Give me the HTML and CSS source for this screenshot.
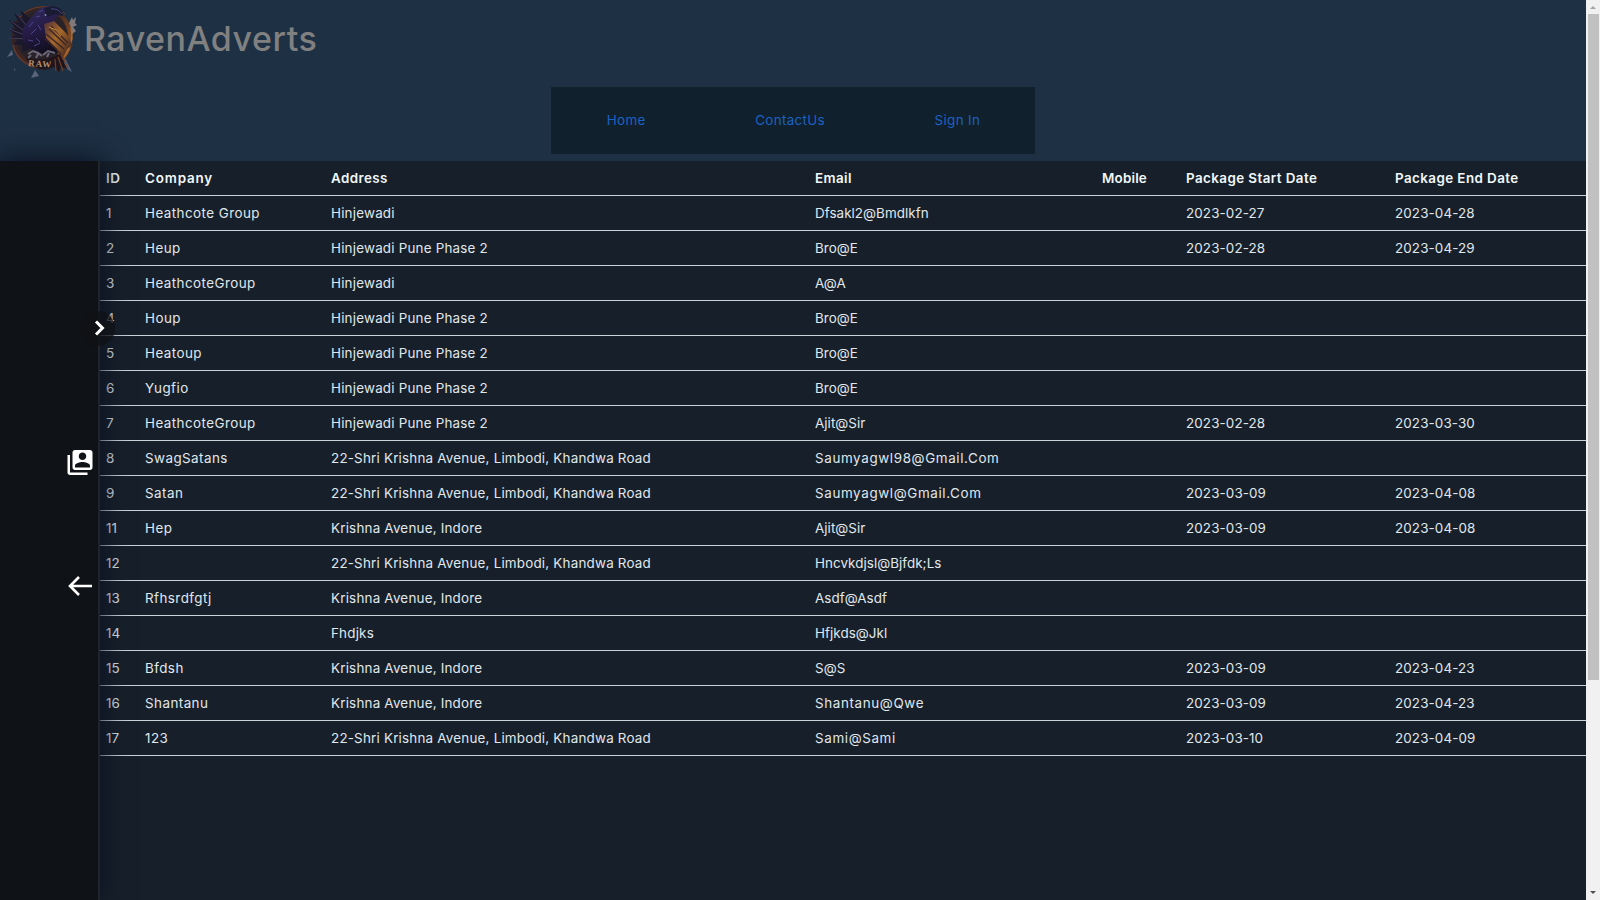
FILE: index.html
```html
<!DOCTYPE html>
<html lang="en">
<head>
<meta charset="utf-8">
<title>RavenAdverts</title>
<link rel="stylesheet" href="styles.css">
</head>
<body>
<div class="page">
  <div class="content">
    <header class="header">
      <div class="brand">
        <svg class="logo" viewBox="0 0 84 84">
          <defs>
            <linearGradient id="ring" x1="0" y1="0" x2="1" y2="0.6"><stop offset="0" stop-color="#2b2029"/><stop offset=".6" stop-color="#42261f"/><stop offset="1" stop-color="#8f5322"/></linearGradient>
            <linearGradient id="wing" x1="0" y1="0" x2="1" y2="1"><stop offset="0" stop-color="#4d3035"/><stop offset=".4" stop-color="#a5682b"/><stop offset=".7" stop-color="#5e3823"/><stop offset="1" stop-color="#2c191b"/></linearGradient>
            <linearGradient id="body" x1="0" y1="0" x2="0.4" y2="1"><stop offset="0" stop-color="#302e60"/><stop offset=".5" stop-color="#271c49"/><stop offset="1" stop-color="#110e1e"/></linearGradient>
          </defs>
          <path d="M69 23l3-6 1 3 3-3-1 6 2 2-4 2 3 4-5 4z" fill="#82797b"/>
          <path d="M12 50l-5 7 6-2zM65 58l7 14-5-3-3-6zM31 78l4-8 4 6-4 1zM14 68l2 3-2-1z" fill="#59647b"/>
          <ellipse cx="42" cy="37.500" rx="30.500" ry="31.500" fill="url(#ring)"/>
          <ellipse cx="42" cy="37" rx="26" ry="27" fill="#282228"/>
          <path d="M20 17C30 5 52 3 65 14" fill="none" stroke="#70412b"/>
          <path d="M71 28C75 44 65 58 55 64" fill="none" stroke="#b06a2c" stroke-width="1.500"/>
          <path d="M13 45C16 59 28 67 43 69" fill="none" stroke="#63392b" stroke-width="1.500"/>
          <path d="M36 24L20 10l3 9-9-6 5 10-10-3 7 9-8 0 8 6-7 3 9 2-5 4 9 1 0 7 13-5z" fill="#1b182c"/>
          <path d="M17 14l12 15M11 21l16 12M9 29l18 7M9 38l17 1" stroke="#463c54" fill="none"/>
          <path d="M62 13C56 4 42 5 36 12L25 25c-5 9-3 18 6 24l13 5 17-1 6-12-13-22z" fill="url(#body)"/>
          <path d="M44 9C53 3 64 8 63 16l-8-2-8 3z" fill="#191b32"/>
          <path d="M51 9q7-1 11 5M39 12l4-2M36 17l4-1M29 27l4-5M31 34l5-5M28 40l5 1M36 38l4 4M34 46l6-3M38 25l3 5" stroke="#4b488b" fill="none"/>
          <path d="M44 24l10-3 12 12 7 12-6 4-7 16-3-16-11-11z" fill="url(#wing)"/>
          <path d="M49 29l17 16M46 34l18 15M51 26l17 17M45 39l16 15" fill="none" stroke="#382327" stroke-width="1.300"/>
          <path d="M49 27l7 3 5 6" stroke="#c98a3d" fill="none"/>
          <circle cx="45.500" cy="15" r="1" fill="#7c8ab9"/>
          <path d="M25 57q17 6 35-3l7 15-6-2-2 5-5-5q-14 7-25-4z" fill="#21151b"/>
          <path d="M28 54l5-3 5 2 4 3M43 55l5-4 7 2M31 55l-3 3M38 54l-2 4M49 53l-2 4" fill="none" stroke="#6b6776" stroke-width="2"/>
          <text class="logo-word" x="28" y="66" transform="rotate(4 28 66)">RAW</text>
          <path d="M55 59l1 12M58 57l5 14M62 55l6 14" stroke="#70412c" stroke-width="1.200"/>
        </svg>
        <span class="brand-name">RavenAdverts</span>
      </div>
      <nav class="nav"><a>Home</a><a>ContactUs</a><a>Sign In</a></nav>
    </header>
    <div class="main">
      <aside class="sidebar">
        <div class="side-icons">
          <svg class="account" viewBox="0 0 24 24"><path d="M4 6H2v14c0 1.100.9 2 2 2h14v-2H4V6zm16-4H8c-1.100 0-2 .9-2 2v12c0 1.100.9 2 2 2h12c1.100 0 2-.9 2-2V4c0-1.100-.9-2-2-2zm-6 2c1.660 0 3 1.340 3 3s-1.340 3-3 3-3-1.340-3-3 1.340-3 3-3zm6 12H8v-1.500c0-1.990 4-3 6-3s6 1.010 6 3V16z"/></svg>
          <svg class="back" viewBox="0 0 26 22"><path d="M25 11H3M12 2L3 11l9 9"/></svg>
        </div>
        <div class="handle"><svg viewBox="0 0 12 16"><path d="M2 1.500l6.500 6.500-6.500 6.500"/></svg></div>
      </aside>
      <div class="table" id="table"></div>
    </div>
  </div>
  <div class="scrollbar"><i class="up"></i><i class="thumb"></i><i class="down"></i></div>
</div>
<script src="table.js"></script>
</body>
</html>
```

FILE: styles.css
```css
* { box-sizing: border-box; }
body { margin: 0; font-family: Inter, "Open Sans", sans-serif; font-size: 13.4px; overflow: hidden; background: #17202a; }
.page { display: flex; height: 900px; }
.content { flex: 1; display: flex; flex-direction: column; min-width: 0; overflow: hidden; }
.header { height: 161px; flex: none; background: #1e3044; }
.brand { display: flex; height: 87px; }
.logo { width: 84px; height: 84px; flex: none; }
.logo-word { font: bold 9px "Liberation Serif", serif; fill: #b3916a; letter-spacing: 1px; }
.brand-name { color: #808080; font-size: 34px; font-weight: 500; line-height: 77px; letter-spacing: 0.5px; }
.nav { width: 484px; height: 67px; margin: 0 auto; background: #10202d; display: flex; justify-content: space-around; align-items: center; color: #1b62c4; padding: 0 0 2px 1px; letter-spacing: 0.35px; }
.main { flex: 1; display: flex; min-height: 0; }
.sidebar { position: relative; z-index: 2; width: 100px; flex: none; background: #0f1216; border-right: 2px solid #20242b; box-shadow: 0 0 26px 2px #0b1022; }
.side-icons { display: flex; flex-direction: column; align-items: flex-end; padding: 286px 3px 0 0; }
.account { width: 30px; height: 31px; fill: #fff; }
.back { width: 26px; height: 22px; margin: 97px 2px 0 0; fill: none; stroke: #fff; stroke-width: 2.6; }
.handle { position: absolute; left: 80px; top: 150px; width: 35px; height: 35px; border-radius: 50%; background: rgba(15, 17, 20, 0.72); }
.handle svg { display: block; width: 12px; height: 16px; margin: 9px 0 0 14px; fill: none; stroke: #fff; stroke-width: 3; }
.table { flex: 1; color: #e0e8ed; background: #17202a; }
.row { display: grid; grid-template-columns: 39px 186px 484px 287px 84px 209px 1fr; height: 35px; border-bottom: 1px solid #cbd2d8; line-height: 34px; white-space: nowrap; }
.row span { padding-left: 6px; letter-spacing: 0.12px; }
.row span:nth-child(2) { letter-spacing: 0.45px; }
.row span:nth-child(3) { letter-spacing: 0.21px; }
.row span:nth-child(4) { letter-spacing: 0.06px; }
.row span.long-email { letter-spacing: 0.64px; }
.row.head { font-weight: 600; color: #f1f7f9; }
.row.head span { letter-spacing: 0.42px; }
.row.head span:nth-child(2) { letter-spacing: 0.85px; }
.row.head span:nth-child(5) { letter-spacing: 0.2px; }
.scrollbar { width: 14px; background: #f1f1f1; display: flex; flex-direction: column; align-items: center; }
.up, .down { width: 0; height: 0; border: 3px solid transparent; flex: none; }
.up { border-bottom-color: #a3a3a3; border-top: 0; margin-top: 6px; }
.thumb { width: 11px; height: 666px; margin-top: 5px; background: #c1c1c1; }
.down { border-top-color: #505050; border-bottom: 0; margin-top: auto; margin-bottom: 6px; }
```

FILE: table.js
```javascript
const rows = [
  ["ID", "Company", "Address", "Email", "Mobile", "Package Start Date", "Package End Date"],
  ["1", "Heathcote Group", "Hinjewadi", "Dfsakl2@Bmdlkfn", "", "2023-02-27", "2023-04-28"],
  ["2", "Heup", "Hinjewadi Pune Phase 2", "Bro@E", "", "2023-02-28", "2023-04-29"],
  ["3", "HeathcoteGroup", "Hinjewadi", "A@A", "", "", ""],
  ["4", "Houp", "Hinjewadi Pune Phase 2", "Bro@E", "", "", ""],
  ["5", "Heatoup", "Hinjewadi Pune Phase 2", "Bro@E", "", "", ""],
  ["6", "Yugfio", "Hinjewadi Pune Phase 2", "Bro@E", "", "", ""],
  ["7", "HeathcoteGroup", "Hinjewadi Pune Phase 2", "Ajit@Sir", "", "2023-02-28", "2023-03-30"],
  ["8", "SwagSatans", "22-Shri Krishna Avenue, Limbodi, Khandwa Road", "Saumyagwl98@Gmail.Com", "", "", ""],
  ["9", "Satan", "22-Shri Krishna Avenue, Limbodi, Khandwa Road", "Saumyagwl@Gmail.Com", "", "2023-03-09", "2023-04-08"],
  ["11", "Hep", "Krishna Avenue, Indore", "Ajit@Sir", "", "2023-03-09", "2023-04-08"],
  ["12", "", "22-Shri Krishna Avenue, Limbodi, Khandwa Road", "Hncvkdjsl@Bjfdk;Ls", "", "", ""],
  ["13", "Rfhsrdfgtj", "Krishna Avenue, Indore", "Asdf@Asdf", "", "", ""],
  ["14", "", "Fhdjks", "Hfjkds@Jkl", "", "", ""],
  ["15", "Bfdsh", "Krishna Avenue, Indore", "S@S", "", "2023-03-09", "2023-04-23"],
  ["16", "Shantanu", "Krishna Avenue, Indore", "Shantanu@Qwe", "", "2023-03-09", "2023-04-23"],
  ["17", "123", "22-Shri Krishna Avenue, Limbodi, Khandwa Road", "Sami@Sami", "", "2023-03-10", "2023-04-09"]
];
const table = document.getElementById("table");
rows.forEach((cells, i) => {
  const row = document.createElement("div");
  row.className = i ? "row" : "row head";
  cells.forEach(text => {
    const cell = document.createElement("span");
    cell.textContent = text;
    if (/@(Gmail|Qwe|Sami)/.test(text)) cell.className = "long-email";
    row.append(cell);
  });
  table.append(row);
});
```
